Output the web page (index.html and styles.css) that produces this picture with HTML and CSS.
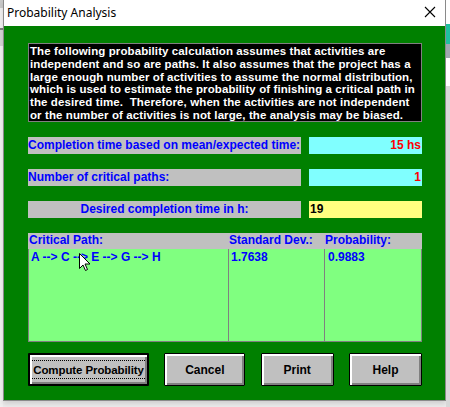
FILE: index.html
```html
<!DOCTYPE html>
<html>
<head>
<meta charset="utf-8">
<link rel="stylesheet" href="styles.css">
</head>
<body>
<div class="desktop">
  <div class="bg-left"></div>
  <div class="window">
    <div class="titlebar">
      <span class="title">Probability Analysis</span>
      <svg class="close" width="12" height="12" viewBox="0 0 12 12"><path d="M1 1 L11 11 M11 1 L1 11" stroke="#000" stroke-width="1.1" fill="none"/></svg>
    </div>
    <div class="client">
      <div class="note">The following probability calculation assumes that activities are<br>independent and so are paths. It also assumes that the project has a<br>large enough number of activities to assume the normal distribution,<br>which is used to estimate the probability of finishing a critical path in<br>the desired time.&nbsp; Therefore, when the activities are not independent<br>or the number of activities is not large, the analysis may be biased.</div>
      <div class="row">
        <div class="label">Completion time based on mean/expected time:</div>
        <div class="value cyan">15 hs</div>
      </div>
      <div class="row">
        <div class="label">Number of critical paths:</div>
        <div class="value cyan">1</div>
      </div>
      <div class="row">
        <div class="label center">Desired completion time in h:</div>
        <div class="value yellow">19</div>
      </div>
      <div class="table">
        <div class="thead">
          <div class="c1">Critical Path:</div>
          <div class="c2">Standard Dev.:</div>
          <div class="c3">Probability:</div>
        </div>
        <div class="tbody">
          <div class="c1">A --&gt; C --&gt; E --&gt; G --&gt; H</div>
          <div class="c2">1.7638</div>
          <div class="c3">0.9883</div>
        </div>
        <svg class="cursor" width="12" height="19" viewBox="0 0 12 19"><path d="M0.5 0.5 L0.5 15.5 L4 12 L6.5 17.5 L8.5 16.5 L6 11 L11 11 Z" fill="#fff" stroke="#000" stroke-width="1"/></svg>
      </div>
      <div class="buttons">
        <div class="btn default"><span class="focus">Compute Probability</span></div>
        <div class="btn w81">Cancel</div>
        <div class="btn w73">Print</div>
        <div class="btn w73">Help</div>
      </div>
    </div>
  </div>
  <div class="bg-right"></div>
</div>
</body>
</html>
```
FILE: styles.css
```css
html, body {
  margin: 0;
  padding: 0;
}
body {
  width: 450px;
  height: 407px;
  overflow: hidden;
  background: #ececec;
  font-family: "Liberation Sans", Arial, sans-serif;
}
.desktop {
  display: flex;
  width: 450px;
  height: 407px;
}
.bg-left {
  width: 3px;
  height: 407px;
  background: linear-gradient(#c8c8c8 0 8px, #f0f0f0 8px 28px, #808080 28px 30px, #d4d4d4 30px 46px, #f0f0f0 46px);
}
.bg-right {
  width: 4px;
  height: 407px;
  background: linear-gradient(#ffffff 0 24px, #20c0a0 24px 44px, #a0a8b0 44px 58px, #ffffff 58px 86px, #d8d8d8 86px);
}
.window {
  width: 441px;
  height: 400px;
  border: 1px solid #8a8a8a;
  border-top: none;
  display: flex;
  flex-direction: column;
  box-shadow: 0 3px 5px rgba(0,0,0,0.12);
}
.titlebar {
  height: 26px;
  background: #fff;
  display: flex;
  align-items: center;
  justify-content: space-between;
  padding: 0 9px 0 3px;
}
.title {
  font-family: "Noto Sans", "Open Sans", sans-serif;
  font-size: 12px;
  color: #000;
  position: relative;
  top: -1px;
}
.close {
  position: relative;
  top: -1px;
}
.client {
  flex: 1;
  background: #008000;
  padding: 17px 23px 0 24px;
  display: flex;
  flex-direction: column;
}
.note {
  background: #000;
  border: 1px solid #808080;
  color: #fff;
  font-weight: bold;
  font-size: 11.5px;
  line-height: 12.75px;
  padding: 1px 1px 2px 1px;
  height: 74px;
  white-space: nowrap;
  letter-spacing: 0.1px;
}
.row {
  display: flex;
  justify-content: space-between;
  height: 17px;
  margin-top: 15px;
}
.row:first-of-type { margin-top: 16px; }
.label {
  width: 273px;
  background: #c0c0c0;
  color: #0000ff;
  font-weight: bold;
  font-size: 12px;
  line-height: 17px;
  white-space: nowrap;
}
.label.center { text-align: center; }
.value {
  width: 113px;
  font-weight: bold;
  font-size: 12px;
  line-height: 17px;
  padding: 0 1px;
  box-sizing: border-box;
}
.cyan { background: #80ffff; color: #ff0000; text-align: right; }
.yellow { background: #ffff80; color: #000; }
.table {
  margin-top: 15px;
  position: relative;
}
.thead {
  display: grid;
  grid-template-columns: 200px 96px 97px;
  background: #c0c0c0;
  height: 16px;
  color: #0000ff;
  font-weight: bold;
  font-size: 12px;
  line-height: 14px;
}
.thead > div { padding-left: 1px; }
.tbody {
  display: grid;
  grid-template-columns: 199px 96px 96px;
  background: #80ff80;
  border: 1px solid #808080;
  border-top: none;
  box-sizing: border-box;
  height: 93px;
  color: #0000ff;
  font-weight: bold;
  font-size: 12px;
  line-height: 14px;
}
.tbody > div { padding: 1px 0 0 2px; white-space: nowrap; }
.tbody > .c2, .tbody > .c3 { border-left: 1px solid #808080; }
.tbody > .c2 { padding-left: 2px; }
.tbody > .c3 { padding-left: 3px; }
.cursor {
  position: absolute;
  left: 51px;
  top: 20px;
}
.buttons {
  display: flex;
  justify-content: space-between;
  margin-top: 11px;
}
.btn {
  height: 33px;
  box-sizing: border-box;
  border: 1px solid #000;
  border-radius: 1px;
  background: #c0c0c0;
  box-shadow: inset 1px 1px 0 #fff, inset 2px 2px 0 #fff, inset -1px -1px 0 #808080, inset -2px -2px 0 #808080;
  display: flex;
  align-items: center;
  justify-content: center;
  font-weight: bold;
  font-size: 12px;
  color: #000;
  white-space: nowrap;
}
.btn.default {
  width: 121px;
  border-width: 2px;
}
.w81 { width: 81px; }
.w73 { width: 73px; }
.focus {
  border-top: 1px dotted #000;
  border-bottom: 1px dotted #000;
  padding: 3px 0 2px;
  width: 113px;
  text-align: center;
  font-size: 11.5px;
  letter-spacing: -0.1px;
}
```
